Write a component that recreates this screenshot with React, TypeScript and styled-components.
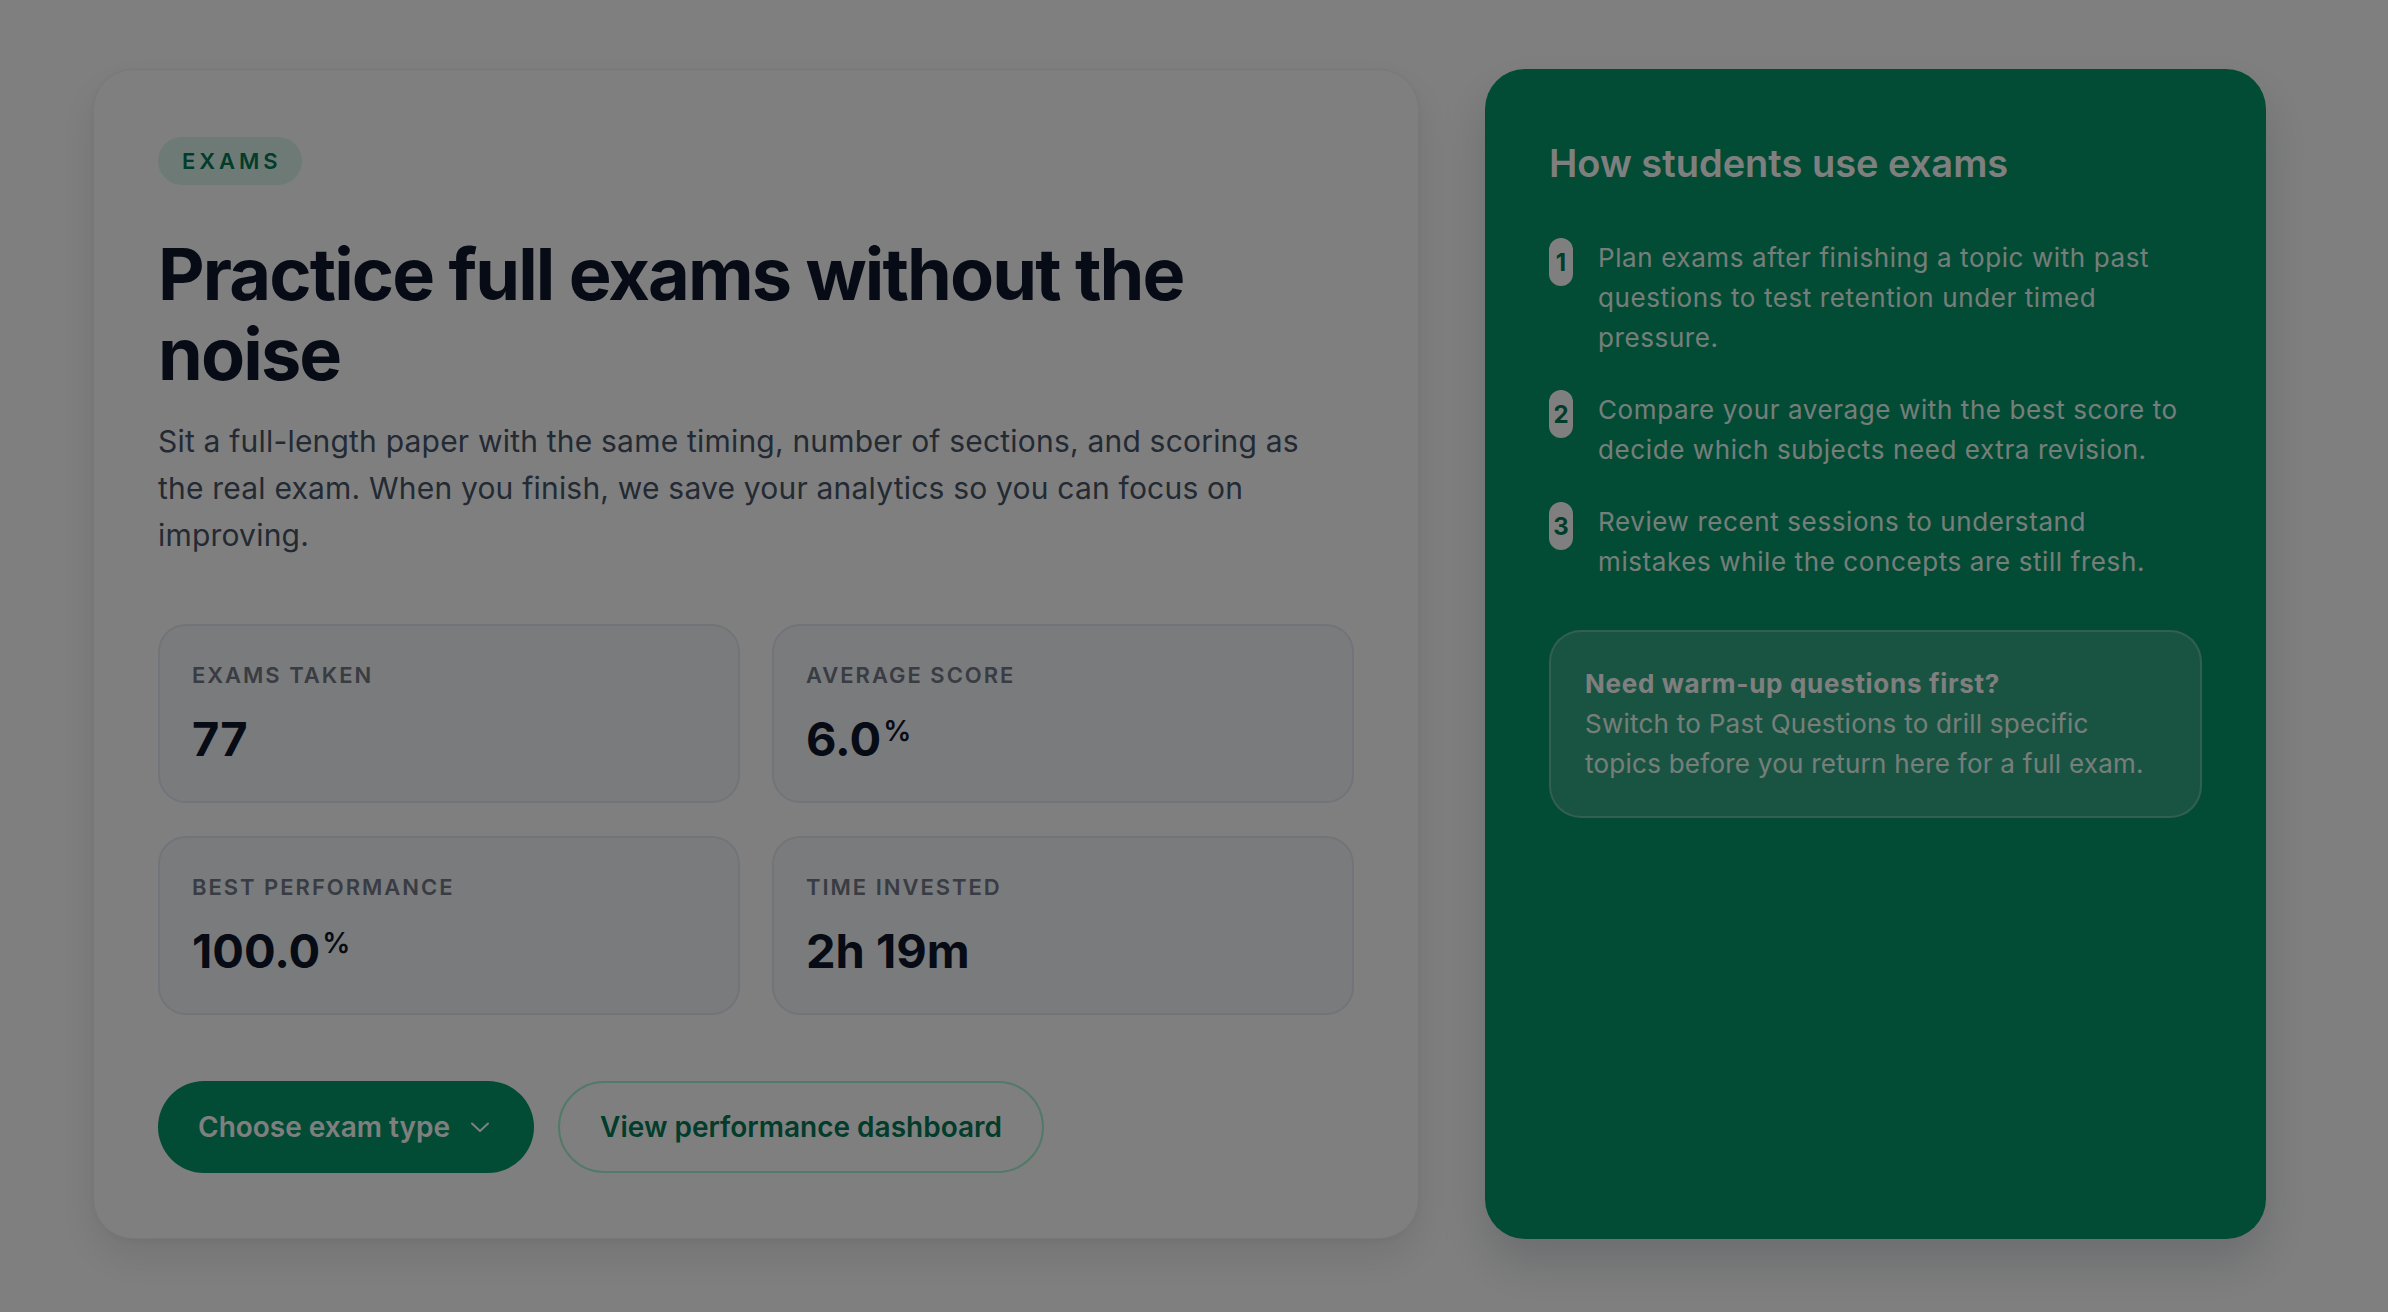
import styled, { createGlobalStyle } from "styled-components";

const GlobalStyle = createGlobalStyle`
  * {
    box-sizing: border-box;
  }

  html,
  body {
    margin: 0;
    padding: 0;
    background: #ffffff;
    font-family: Inter, "Noto Sans", "Liberation Sans", sans-serif;
    color: #0f172a;
    -webkit-font-smoothing: antialiased;
  }
`;

const stats = [
  { label: "Exams taken", value: "77" },
  { label: "Average score", value: "6.0", unit: "%" },
  { label: "Best performance", value: "100.0", unit: "%" },
  { label: "Time invested", value: "2h 19m" },
];

const steps = [
  "Plan exams after finishing a topic with past questions to test retention under timed pressure.",
  "Compare your average with the best score to decide which subjects need extra revision.",
  "Review recent sessions to understand mistakes while the concepts are still fresh.",
];

const ChevronDown = () => (
  <svg width="24" height="24" viewBox="0 0 24 24" fill="none">
    <path
      d="M4 8.5l8 7.5 8-7.5"
      stroke="currentColor"
      strokeWidth="2"
      strokeLinecap="round"
      strokeLinejoin="round"
    />
  </svg>
);

const App = () => {
  return (
    <>
      <GlobalStyle />
      <Page>
        <Layout>
          <MainCard>
            <Eyebrow>Exams</Eyebrow>
            <Title>Practice full exams without the noise</Title>
            <Lead>
              Sit a full-length paper with the same timing, number of sections,
              and scoring as the real exam. When you finish, we save your
              analytics so you can focus on improving.
            </Lead>

            <StatGrid>
              {stats.map((s) => (
                <StatCard key={s.label}>
                  <StatLabel>{s.label}</StatLabel>
                  <StatValue>
                    {s.value}
                    {s.unit && <StatUnit>{s.unit}</StatUnit>}
                  </StatValue>
                </StatCard>
              ))}
            </StatGrid>

            <Actions>
              <PrimaryButton type="button">
                Choose exam type
                <ChevronDown />
              </PrimaryButton>
              <OutlineButton type="button">View performance dashboard</OutlineButton>
            </Actions>
          </MainCard>

          <TipsCard>
            <TipsTitle>How students use exams</TipsTitle>
            <StepList>
              {steps.map((text, i) => (
                <Step key={i}>
                  <StepNumber>{i + 1}</StepNumber>
                  <StepText>{text}</StepText>
                </Step>
              ))}
            </StepList>

            <Callout>
              <CalloutTitle>Need warm-up questions first?</CalloutTitle>
              <CalloutText>
                Switch to Past Questions to drill specific topics before you
                return here for a full exam.
              </CalloutText>
            </Callout>
          </TipsCard>
        </Layout>
      </Page>
      <Backdrop />
    </>
  );
};

export default App;

const Page = styled.main`
  min-height: 100vh;
  padding: 69px 0 0 93px;
`;

const Layout = styled.div`
  display: grid;
  grid-template-columns: 1326px 781px;
  gap: 66px;
  align-items: stretch;
`;

const MainCard = styled.section`
  display: flex;
  flex-direction: column;
  align-items: flex-start;
  padding: 67px 64px 65px;
  background: #ffffff;
  border: 1px solid #eef0f4;
  border-radius: 40px;
  box-shadow: 0 18px 40px rgba(15, 23, 42, 0.1), 0 2px 6px rgba(15, 23, 42, 0.04);
`;

const Eyebrow = styled.span`
  display: inline-block;
  height: 48px;
  padding: 0 20px 0 24px;
  border-radius: 999px;
  background: #dcf5ea;
  color: #047857;
  font-size: 22px;
  font-weight: 600;
  line-height: 48px;
  letter-spacing: 0.18em;
  text-transform: uppercase;
`;

const Title = styled.h1`
  margin: 49px 0 0;
  font-size: 72px;
  font-weight: 700;
  line-height: 80px;
  letter-spacing: -0.026em;
  color: #0f172a;
`;

const Lead = styled.p`
  max-width: 1170px;
  margin: 24px 0 0;
  font-size: 30px;
  line-height: 47px;
  letter-spacing: 0.2px;
  color: #475569;
`;

const StatGrid = styled.div`
  display: grid;
  grid-template-columns: repeat(2, 1fr);
  gap: 33px 32px;
  width: 100%;
  margin-top: 65px;
`;

const StatCard = styled.div`
  display: flex;
  flex-direction: column;
  gap: 20px;
  padding: 34px 32px 34px;
  background: #f4f6f9;
  border: 2px solid #e2e8f0;
  border-radius: 28px;
`;

const StatLabel = styled.span`
  font-size: 22px;
  font-weight: 600;
  line-height: 1.4;
  letter-spacing: 0.09em;
  text-transform: uppercase;
  color: #737886;
`;

const StatValue = styled.span`
  font-size: 47px;
  font-weight: 700;
  line-height: 1.2;
  color: #0f172a;
`;

const StatUnit = styled.span`
  display: inline-block;
  margin: 6px 0 0 2px;
  font-size: 28px;
  font-weight: 600;
  line-height: 1;
  vertical-align: top;
`;

const Actions = styled.div`
  display: flex;
  align-items: center;
  gap: 24px;
  margin-top: 66px;
`;

const PrimaryButton = styled.button`
  display: inline-flex;
  align-items: center;
  gap: 18px;
  height: 92px;
  padding: 0 42px 0 40px;
  border: none;
  border-radius: 999px;
  background: #059669;
  color: #ffffff;
  font-family: inherit;
  font-size: 28px;
  font-weight: 600;
  cursor: pointer;
`;

const OutlineButton = styled.button`
  display: inline-flex;
  align-items: center;
  height: 92px;
  padding: 0 40px;
  border: 2px solid #a7f3d0;
  border-radius: 999px;
  background: #ffffff;
  color: #047857;
  font-family: inherit;
  font-size: 28px;
  font-weight: 600;
  cursor: pointer;
`;

const TipsCard = styled.aside`
  display: flex;
  flex-direction: column;
  padding: 70px 64px 64px;
  background: #059669;
  border-radius: 40px;
  box-shadow: 0 24px 48px rgba(15, 23, 42, 0.16);
  color: #ffffff;
`;

const TipsTitle = styled.h2`
  margin: 0;
  font-size: 38px;
  font-weight: 600;
  line-height: 1.3;
  color: #ffffff;
`;

const StepList = styled.ol`
  display: flex;
  flex-direction: column;
  gap: 32px;
  margin: 50px 0 0;
  padding: 0;
  list-style: none;
`;

const Step = styled.li`
  display: flex;
  align-items: flex-start;
  gap: 25px;
`;

const StepNumber = styled.span`
  flex: none;
  display: flex;
  align-items: center;
  justify-content: center;
  width: 24px;
  height: 48px;
  border-radius: 12px;
  background: #ffffff;
  color: #047857;
  font-size: 24px;
  font-weight: 700;
`;

const StepText = styled.p`
  margin: 0;
  font-size: 26px;
  line-height: 40px;
  letter-spacing: 0.6px;
  color: #ecfdf5;
`;

const Callout = styled.div`
  margin-top: 48px;
  padding: 32px 32px 32px 34px;
  border: 2px solid rgba(255, 255, 255, 0.25);
  border-radius: 32px;
  background: rgba(255, 255, 255, 0.18);
`;

const CalloutTitle = styled.p`
  margin: 0;
  font-size: 26px;
  font-weight: 700;
  line-height: 40px;
  letter-spacing: 0.7px;
  color: #ffffff;
`;

const CalloutText = styled.p`
  margin: 0;
  font-size: 26px;
  line-height: 40px;
  letter-spacing: 0.25px;
  color: #ecfdf5;
`;

const Backdrop = styled.div`
  position: fixed;
  inset: 0;
  z-index: 50;
  background: rgba(0, 0, 0, 0.5);
`;
